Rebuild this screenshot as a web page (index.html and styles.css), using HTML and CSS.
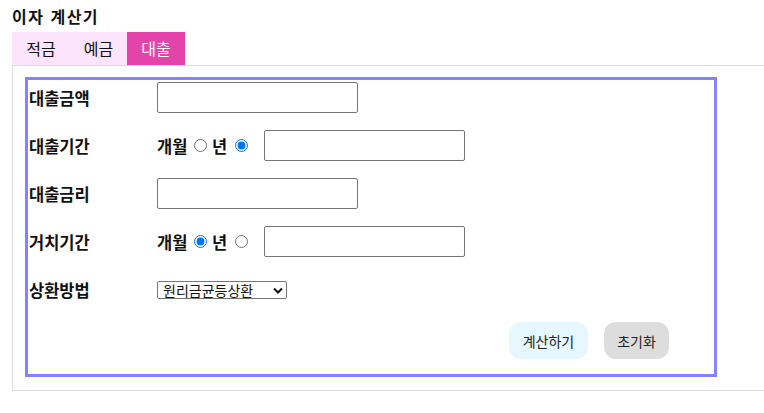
FILE: index.html
```html
<!DOCTYPE html>
<html lang="ko">
<head>
<meta charset="utf-8">
<title>이자 계산기</title>
<link rel="stylesheet" href="styles.css">
</head>
<body>
<div class="app">
  <h1 class="title">이자 계산기</h1>
  <div class="tabs">
    <div class="tab t1">적금</div>
    <div class="tab t2">예금</div>
    <div class="tab t3 active">대출</div>
  </div>
  <div class="panel">
    <form class="form">
      <div class="row">
        <label class="label">대출금액</label>
        <input class="text-input" type="text">
      </div>
      <div class="row">
        <label class="label">대출기간</label>
        <span class="unit">개월</span>
        <input class="radio r1" type="radio" name="period">
        <span class="unit unit-year">년</span>
        <input class="radio r2" type="radio" name="period" checked>
        <input class="text-input" type="text">
      </div>
      <div class="row">
        <label class="label">대출금리</label>
        <input class="text-input" type="text">
      </div>
      <div class="row">
        <label class="label">거치기간</label>
        <span class="unit">개월</span>
        <input class="radio r1" type="radio" name="grace" checked>
        <span class="unit unit-year">년</span>
        <input class="radio r2" type="radio" name="grace">
        <input class="text-input" type="text">
      </div>
      <div class="row">
        <label class="label">상환방법</label>
        <span class="select-wrap">
          <select class="select">
            <option>원리금균등상환</option>
            <option>원금균등상환</option>
            <option>만기일시상환</option>
          </select>
          <svg class="chev" width="10" height="7" viewBox="0 0 10 7"><path d="M1 1.5 L5 5.5 L9 1.5" fill="none" stroke="#111" stroke-width="2"/></svg>
        </span>
      </div>
      <div class="actions">
        <button type="button" class="btn btn-calc">계산하기</button>
        <button type="button" class="btn btn-reset">초기화</button>
      </div>
    </form>
  </div>
</div>
</body>
</html>
```
FILE: styles.css
```css
html, body {
  margin: 0;
  padding: 0;
  background: #fff;
  overflow: hidden;
}
body {
  font-family: "Noto Sans CJK KR", "Noto Sans", sans-serif;
  color: #111;
}
.app {
  padding: 5px 12px 0 12px;
}
.title {
  margin: 0 0 4px 0;
  font-size: 16px;
  line-height: 23px;
  font-weight: 700;
  letter-spacing: 1.5px;
  color: #111;
}
.tabs {
  display: flex;
  width: 173px;
  height: 33px;
  background: #fde4fd;
}
.tab {
  font-size: 16px;
  line-height: 33px;
  text-align: center;
  color: #111;
}
.t1 { width: 58px; }
.t2 { width: 57px; }
.t3 { width: 58px; }
.tab.active {
  background: #e443a9;
  color: #fff;
}
.panel {
  width: 760px;
  border: 1px solid #ddd;
  padding: 11px 12px 13px 12px;
}
.form {
  width: 685px;
  border: 3px solid #8383ff;
  padding: 2px 0 15px 1px;
  display: flex;
  flex-direction: column;
  gap: 17px;
  box-sizing: content-box;
}
.row {
  display: flex;
  align-items: center;
  height: 31px;
}
.label {
  width: 128px;
  font-size: 16.5px;
  font-weight: 700;
  color: #111;
}
.unit {
  font-size: 16.5px;
  font-weight: 700;
  width: 31px;
  white-space: nowrap;
}
.unit-year {
  width: 16px;
}
.radio {
  width: 13px;
  height: 13px;
  margin: 0;
  accent-color: #0075ff;
}
.r1 {
  margin-left: 6px;
  margin-right: 5px;
}
.r2 {
  margin-left: 7px;
  margin-right: 16px;
}
.text-input {
  box-sizing: border-box;
  width: 201px;
  height: 31px;
  margin: 0;
  border: 1px solid #767676;
  border-radius: 2px;
  padding: 1px 4px;
  font-size: 13px;
  background: #fff;
}
.select-wrap {
  position: relative;
  display: flex;
  height: 18px;
}
.select {
  appearance: none;
  -webkit-appearance: none;
  box-sizing: border-box;
  width: 130px;
  height: 18px;
  margin: 0;
  border: 1px solid #767676;
  border-radius: 2px;
  padding: 0 0 0 5px;
  font-family: "Noto Sans CJK KR", sans-serif;
  font-size: 14px;
  line-height: 16px;
  color: #111;
  background: #fff;
}
.chev {
  position: absolute;
  left: 116px;
  top: 6px;
  pointer-events: none;
}
.actions {
  display: flex;
  justify-content: flex-end;
  gap: 16px;
  padding-right: 45px;
}
.btn {
  height: 37px;
  border: none;
  border-radius: 12px;
  padding: 0;
  font-family: "Noto Sans CJK KR", sans-serif;
  font-size: 14px;
  color: #222;
}
.btn-calc {
  background: #e6f7ff;
  width: 79px;
}
.btn-reset {
  background: #dddddd;
  width: 65px;
}
```
